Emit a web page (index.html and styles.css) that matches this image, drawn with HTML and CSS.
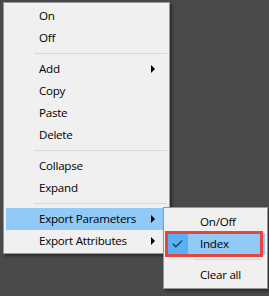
FILE: index.html
```html
<!DOCTYPE html>
<html>
<head>
<meta charset="utf-8">
<link rel="stylesheet" href="styles.css">
</head>
<body>
<div class="menu">
  <div class="item">On</div>
  <div class="item">Off</div>
  <div class="sep"></div>
  <div class="item">Add<span class="arrow"></span></div>
  <div class="item">Copy</div>
  <div class="item">Paste</div>
  <div class="item">Delete</div>
  <div class="sep"></div>
  <div class="item">Collapse</div>
  <div class="item">Expand</div>
  <div class="sep"></div>
  <div class="item hl">Export Parameters<span class="arrow"></span>
    <div class="menu sub">
      <div class="item">On/Off</div>
      <div class="item hl checked"><span class="checkbg"><svg width="11" height="8" viewBox="0 0 11 8"><path d="M0.8 3.8 L3.8 6.8 L10.2 0.6" fill="none" stroke="#333" stroke-width="1.3"/></svg></span>Index<span class="mark"></span></div>
      <div class="sep"></div>
      <div class="item">Clear all</div>
    </div>
  </div>
  <div class="item">Export Attributes<span class="arrow"></span></div>
</div>
</body>
</html>
```
FILE: styles.css
```css
html, body {
  margin: 0;
  padding: 0;
  background: #4a4a4a;
  width: 269px;
  height: 296px;
  overflow: hidden;
}
body {
  padding: 2px 0 0 3px;
  box-sizing: border-box;
  font-family: "Open Sans", "Noto Sans", sans-serif;
  font-size: 11.6px;
  letter-spacing: -0.25px;
  color: #000;
}
.menu {
  width: 167px;
  box-sizing: border-box;
  background: #f0f0f0;
  border: 1px solid #979797;
  padding: 2px 2px 1px 2px;
  box-shadow: 2px 2px 3px rgba(0, 0, 0, 0.45);
}
.item {
  position: relative;
  height: 22px;
  line-height: 22px;
  padding-left: 33px;
  white-space: nowrap;
}
.item.hl {
  background: #91c9f7;
}
.arrow {
  position: absolute;
  left: 145px;
  top: 7px;
  width: 0;
  height: 0;
  border-top: 4px solid transparent;
  border-bottom: 4px solid transparent;
  border-left: 4px solid #000;
}
.sep {
  height: 9px;
  display: flex;
  align-items: center;
  padding-left: 28px;
}
.sep::before {
  content: "";
  display: block;
  height: 1px;
  flex: 1;
  background: #d7d7d7;
}
.menu.sub {
  position: absolute;
  left: 157px;
  top: -1px;
  width: 105px;
  padding: 3px 2px 2px 2px;
  box-shadow: 2px 2px 3px rgba(0, 0, 0, 0.45);
  z-index: 2;
}
.sub .item {
  padding-left: 34px;
}
.sub .sep {
  padding-left: 28px;
  padding-right: 4px;
}
.checkbg {
  position: absolute;
  left: 1px;
  top: 0;
  width: 21px;
  height: 22px;
  background: #56b0fa;
  display: flex;
  align-items: center;
  justify-content: center;
}
.mark {
  position: absolute;
  left: -1px;
  right: 2px;
  top: -2px;
  bottom: -2px;
  border: 3px solid #e8453c;
}
```
